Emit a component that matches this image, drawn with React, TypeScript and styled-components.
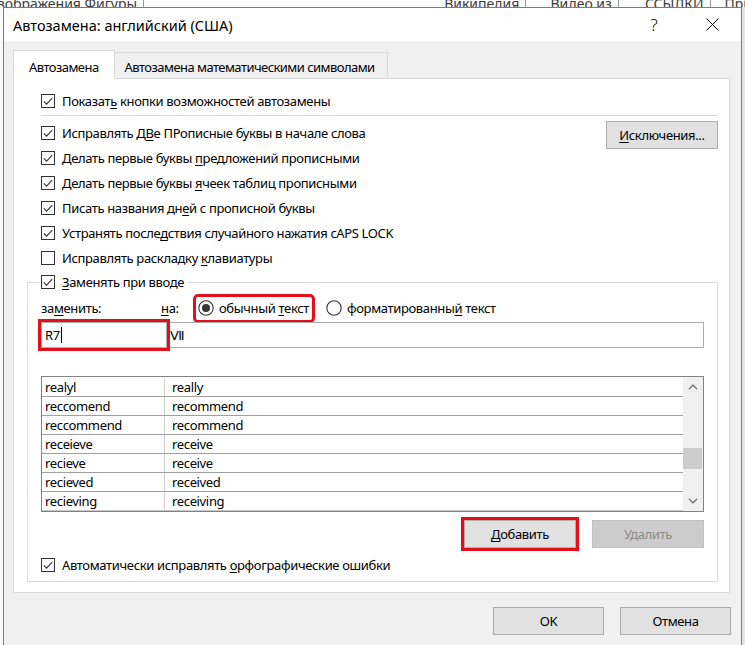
import React from 'react';
import styled, { createGlobalStyle } from 'styled-components';

const FONT = `"Noto Sans", "Segoe UI", "Liberation Sans", sans-serif`;

const GlobalStyle = createGlobalStyle`
    html, body {
        margin: 0;
        padding: 0;
        background: #fff;
    }
    body {
        font-family: ${FONT};
        font-size: 13px;
        color: #000;
        overflow: hidden;
    }
    * {
        box-sizing: border-box;
    }
`;

const rows = [
    ['realyl', 'really'],
    ['reccomend', 'recommend'],
    ['reccommend', 'recommend'],
    ['receieve', 'receive'],
    ['recieve', 'receive'],
    ['recieved', 'received'],
    ['recieving', 'receiving'],
];

const Box = ({ checked }: { checked: boolean }) => (
    <svg width="14" height="14" viewBox="0 0 14 14">
        <rect x="0.5" y="0.5" width="13" height="13" fill="#fff" stroke="#333" />
        {checked && <path d="M2.8 7.3 L5.6 10.1 L11.2 4.2" fill="none" stroke="#333" strokeWidth="1.1" />}
    </svg>
);

const Radio = ({ selected }: { selected: boolean }) => (
    <svg width="16" height="16" viewBox="0 0 16 16">
        <circle cx="8" cy="8" r="7.2" fill="#fff" stroke="#333" strokeWidth="1.1" />
        {selected && <circle cx="8" cy="8" r="4" fill="#333" />}
    </svg>
);

const Chevron = ({ up }: { up?: boolean }) => (
    <svg width="10" height="6" viewBox="0 0 10 6">
        <path d={up ? 'M1 5.2 L5 1.2 L9 5.2' : 'M1 0.8 L5 4.8 L9 0.8'} fill="none" stroke="#606060" strokeWidth="1.2" />
    </svg>
);

const Check = ({ checked = true, children }: { checked?: boolean; children: React.ReactNode }) => (
    <CheckRow>
        <Box checked={checked} />
        <span>{children}</span>
    </CheckRow>
);

export default function App() {
    return (
        <Page>
            <GlobalStyle />
            <Backdrop>
                <BackdropRow>
                    <BackdropItem $left={-2}>зображения Фигуры</BackdropItem>
                    <BackdropItem $left={300}>Википедия</BackdropItem>
                    <BackdropItem $left={24}>Видео из</BackdropItem>
                    <BackdropItem $left={26}>ССЫЛКИ</BackdropItem>
                    <BackdropItem $left={14}>Примечания</BackdropItem>
                </BackdropRow>
            </Backdrop>
            <Stage>
                <LeftEdge />
                <Dialog>
                    <TitleBar>
                        <TitleText>Автозамена: английский (США)</TitleText>
                        <TitleButton>?</TitleButton>
                        <TitleButton>
                            <svg width="13" height="13" viewBox="0 0 13 13">
                                <path d="M0.5 0.5 L12.5 12.5 M12.5 0.5 L0.5 12.5" stroke="#000" strokeWidth="1" />
                            </svg>
                        </TitleButton>
                    </TitleBar>
                    <Body>
                        <Tabs>
                            <Tab $active>Автозамена</Tab>
                            <Tab>Автозамена математическими символами</Tab>
                        </Tabs>
                        <Panel>
                            <TopSection>
                                <Check>Показат<u>ь</u> кнопки возможностей автозамены</Check>
                            </TopSection>
                            <Separator />
                            <Options>
                                <div>
                                    <Check>Исправлять Д<u>В</u>е ПРописные буквы в начале слова</Check>
                                    <Check>Делать первые буквы <u>п</u>редложений прописными</Check>
                                    <Check>Делать первые буквы <u>я</u>чеек таблиц прописными</Check>
                                    <Check>Писать названия дн<u>е</u>й с прописной буквы</Check>
                                    <Check>Устранять после<u>д</u>ствия случайного нажатия cAPS LOCK</Check>
                                    <Check checked={false}>Исправлять раскладку <u>к</u>лавиатуры</Check>
                                </div>
                                <Button>
                                    <u>И</u>сключения...
                                </Button>
                            </Options>
                            <Group>
                                <Legend>
                                    <Box checked />
                                    <span><u>З</u>аменять при вводе</span>
                                </Legend>
                                <LabelsRow>
                                    <FieldLabel $width={120}>за<u>м</u>енить:</FieldLabel>
                                    <FieldLabel $width={32}><u>н</u>а:</FieldLabel>
                                    <RadioOption $marked>
                                        <Radio selected />
                                        <span>обычный <u>т</u>екст</span>
                                    </RadioOption>
                                    <RadioOption>
                                        <Radio selected={false} />
                                        <span>форматированны<u>й</u> текст</span>
                                    </RadioOption>
                                </LabelsRow>
                                <InputsRow>
                                    <FakeInput $marked>
                                        R7<Caret />
                                    </FakeInput>
                                    <FakeInput>Ⅶ</FakeInput>
                                </InputsRow>
                                <ListBox>
                                    <ListRows>
                                        {rows.map(([from, to]) => (
                                            <ListRow key={from}>
                                                <ListCell $first>{from}</ListCell>
                                                <ListCell>{to}</ListCell>
                                            </ListRow>
                                        ))}
                                    </ListRows>
                                    <ScrollTrack>
                                        <ScrollArrow><Chevron up /></ScrollArrow>
                                        <ScrollMiddle>
                                            <Thumb style={{ marginTop: 51 }} />
                                        </ScrollMiddle>
                                        <ScrollArrow><Chevron /></ScrollArrow>
                                    </ScrollTrack>
                                </ListBox>
                                <Actions>
                                    <Button $marked $width={112}>
                                        <u>Д</u>обавить
                                    </Button>
                                    <Button disabled $width={112}>Удалить</Button>
                                </Actions>
                                <BottomCheck>
                                    <Check>Автоматически исправлять <u>о</u>рфографические ошибки</Check>
                                </BottomCheck>
                            </Group>
                        </Panel>
                        <Footer>
                            <Button $width={111}>OK</Button>
                            <Button $width={111}>Отмена</Button>
                        </Footer>
                    </Body>
                </Dialog>
                <RightEdge />
            </Stage>
        </Page>
    );
}

// Styled Components
const Page = styled.div`
    width: 745px;
    height: 645px;
    overflow: hidden;
    display: flex;
    flex-direction: column;
    background: #fff;
    letter-spacing: -0.35px;

    u {
        text-decoration: underline;
        text-underline-offset: 2px;
        text-decoration-thickness: 1px;
    }
`;

const Backdrop = styled.div`
    height: 7px;
    flex: none;
    overflow: hidden;
`;

const BackdropRow = styled.div`
    display: flex;
    margin-top: -4px;
    white-space: nowrap;
    font-size: 14px;
    line-height: 16px;
    letter-spacing: 0;
    color: #3a3a3a;
`;

const BackdropItem = styled.span<{ $left: number }>`
    margin-left: ${p => p.$left}px;
    padding-right: 6px;
    border-right: 1px solid #9a9a9a;
`;

const Stage = styled.div`
    display: flex;
    flex: 1;
    min-height: 0;
`;

const LeftEdge = styled.div`
    width: 3px;
    background: #fafafa;
`;

const RightEdge = styled.div`
    flex: 1;
    background: #e4e4e4;
`;

const Dialog = styled.div`
    width: 739px;
    border: 1px solid #7b7b7b;
    border-bottom: none;
    background: #f0f0f0;
    display: flex;
    flex-direction: column;
`;

const TitleBar = styled.div`
    height: 33px;
    flex: none;
    background: #fff;
    display: flex;
    align-items: center;
    padding-left: 9px;
    font-size: 14.5px;
    letter-spacing: 0;
`;

const TitleText = styled.div`
    flex: 1;
`;

const TitleButton = styled.div`
    width: 58px;
    height: 33px;
    display: flex;
    align-items: center;
    justify-content: center;
    font-size: 17px;
    font-weight: 300;
`;

const Body = styled.div`
    flex: 1;
    padding: 9px 11px 0 9px;
`;

const Tabs = styled.div`
    display: flex;
    align-items: flex-end;
    height: 28px;
    position: relative;
    z-index: 1;
`;

const Tab = styled.div<{ $active?: boolean }>`
    height: ${p => (p.$active ? 29 : 26)}px;
    margin-bottom: ${p => (p.$active ? -1 : 0)}px;
    margin-left: ${p => (p.$active ? 0 : -1)}px;
    padding: ${p => (p.$active ? '4px 15px 0 15px' : '3px 12px 0 10px')};
    display: flex;
    align-items: center;
    border: 1px solid #d9d9d9;
    border-bottom: none;
    background: ${p => (p.$active ? '#fff' : '#f0f0f0')};
    letter-spacing: -0.55px;
    white-space: nowrap;
`;

const Panel = styled.div`
    border: 1px solid #d9d9d9;
    background: #fff;
    padding: 0 11px 10px 13px;
`;

const TopSection = styled.div`
    padding: 9px 0 0 14px;
`;

const CheckRow = styled.div`
    display: flex;
    align-items: center;
    gap: 7px;
    height: 25px;
    white-space: nowrap;

    svg {
        flex: none;
    }
`;

const Separator = styled.div`
    height: 1px;
    background: #dadada;
    margin: 2px 0 4px 14px;
`;

const Options = styled.div`
    display: flex;
    justify-content: space-between;
    align-items: flex-start;
    padding-left: 14px;

    & > button {
        margin-top: 1px;
    }
`;

const Button = styled.button<{ $width?: number; $marked?: boolean }>`
    width: ${p => p.$width ?? 112}px;
    height: 28px;
    padding: 0;
    font-family: ${FONT};
    font-size: 13px;
    letter-spacing: -0.35px;
    color: #000;
    background: #e1e1e1;
    border: 1px solid #adadad;
    border-radius: 0;
    outline: ${p => (p.$marked ? '3px solid #e3101c' : 'none')};
    outline-offset: 0;

    &:disabled {
        background: #cccccc;
        border-color: #bfbfbf;
        color: #8a8a8a;
    }
`;

const Group = styled.fieldset`
    margin: 0;
    min-width: 0;
    border: 1px solid #dcdcdc;
    padding: 0 13px 4px 13px;
`;

const Legend = styled.legend`
    display: flex;
    align-items: center;
    gap: 7px;
    height: 24px;
    padding: 0 3px 0 2px;
    margin-left: -2px;
`;

const LabelsRow = styled.div`
    display: flex;
    align-items: center;
    height: 28px;
`;

const FieldLabel = styled.span<{ $width: number }>`
    width: ${p => p.$width}px;
    flex: none;
`;

const RadioOption = styled.label<{ $marked?: boolean }>`
    display: flex;
    align-items: center;
    gap: 5px;
    height: 23px;
    padding: 0 3px 0 2px;
    margin-left: ${p => (p.$marked ? 3 : 12)}px;
    border-radius: 2px;
    outline: ${p => (p.$marked ? '3px solid #e3101c' : 'none')};
    white-space: nowrap;
`;

const InputsRow = styled.div`
    display: flex;
    height: 26px;
`;

const FakeInput = styled.div<{ $marked?: boolean }>`
    display: flex;
    align-items: center;
    padding-left: 3px;
    background: #fff;
    border: 1px solid #ababab;
    ${p =>
        p.$marked
            ? `
        width: 126px;
        flex: none;
        outline: 3px solid #e3101c;
        position: relative;
        z-index: 1;
    `
            : `
        flex: 1;
        margin-left: -1px;
    `}
`;

const Caret = styled.span`
    display: inline-block;
    width: 1px;
    height: 16px;
    background: #000;
    margin-left: 1px;
`;

const ListBox = styled.div`
    margin-top: 28px;
    height: 136px;
    border: 1px solid #828282;
    display: flex;
    background: #fff;
`;

const ListRows = styled.div`
    flex: 1;
    padding-top: 1px;
`;

const ListRow = styled.div`
    display: grid;
    grid-template-columns: 123px 1fr;
    height: 19px;
    border-bottom: 1px solid #a0a0a0;

    &:last-child {
        border-bottom-color: #c8c8c8;
    }
`;

const ListCell = styled.div<{ $first?: boolean }>`
    line-height: 18px;
    padding-left: ${p => (p.$first ? 3 : 7)}px;
    border-right: ${p => (p.$first ? '1px solid #cfcfcf' : 'none')};
    white-space: nowrap;
`;

const ScrollTrack = styled.div`
    width: 20px;
    background: #f0f0f0;
    display: flex;
    flex-direction: column;
`;

const ScrollArrow = styled.div`
    height: 20px;
    display: flex;
    align-items: center;
    justify-content: center;
`;

const ScrollMiddle = styled.div`
    flex: 1;
`;

const Thumb = styled.div`
    height: 21px;
    margin: 0 1px 0 0;
    background: #cdcdcd;
`;

const Actions = styled.div`
    display: flex;
    justify-content: flex-end;
    gap: 16px;
    margin-top: 8px;
`;

const BottomCheck = styled.div`
    margin-top: 4px;
`;

const Footer = styled.div`
    display: flex;
    justify-content: flex-end;
    gap: 16px;
    margin-top: 14px;
    margin-right: -1px;
`;
